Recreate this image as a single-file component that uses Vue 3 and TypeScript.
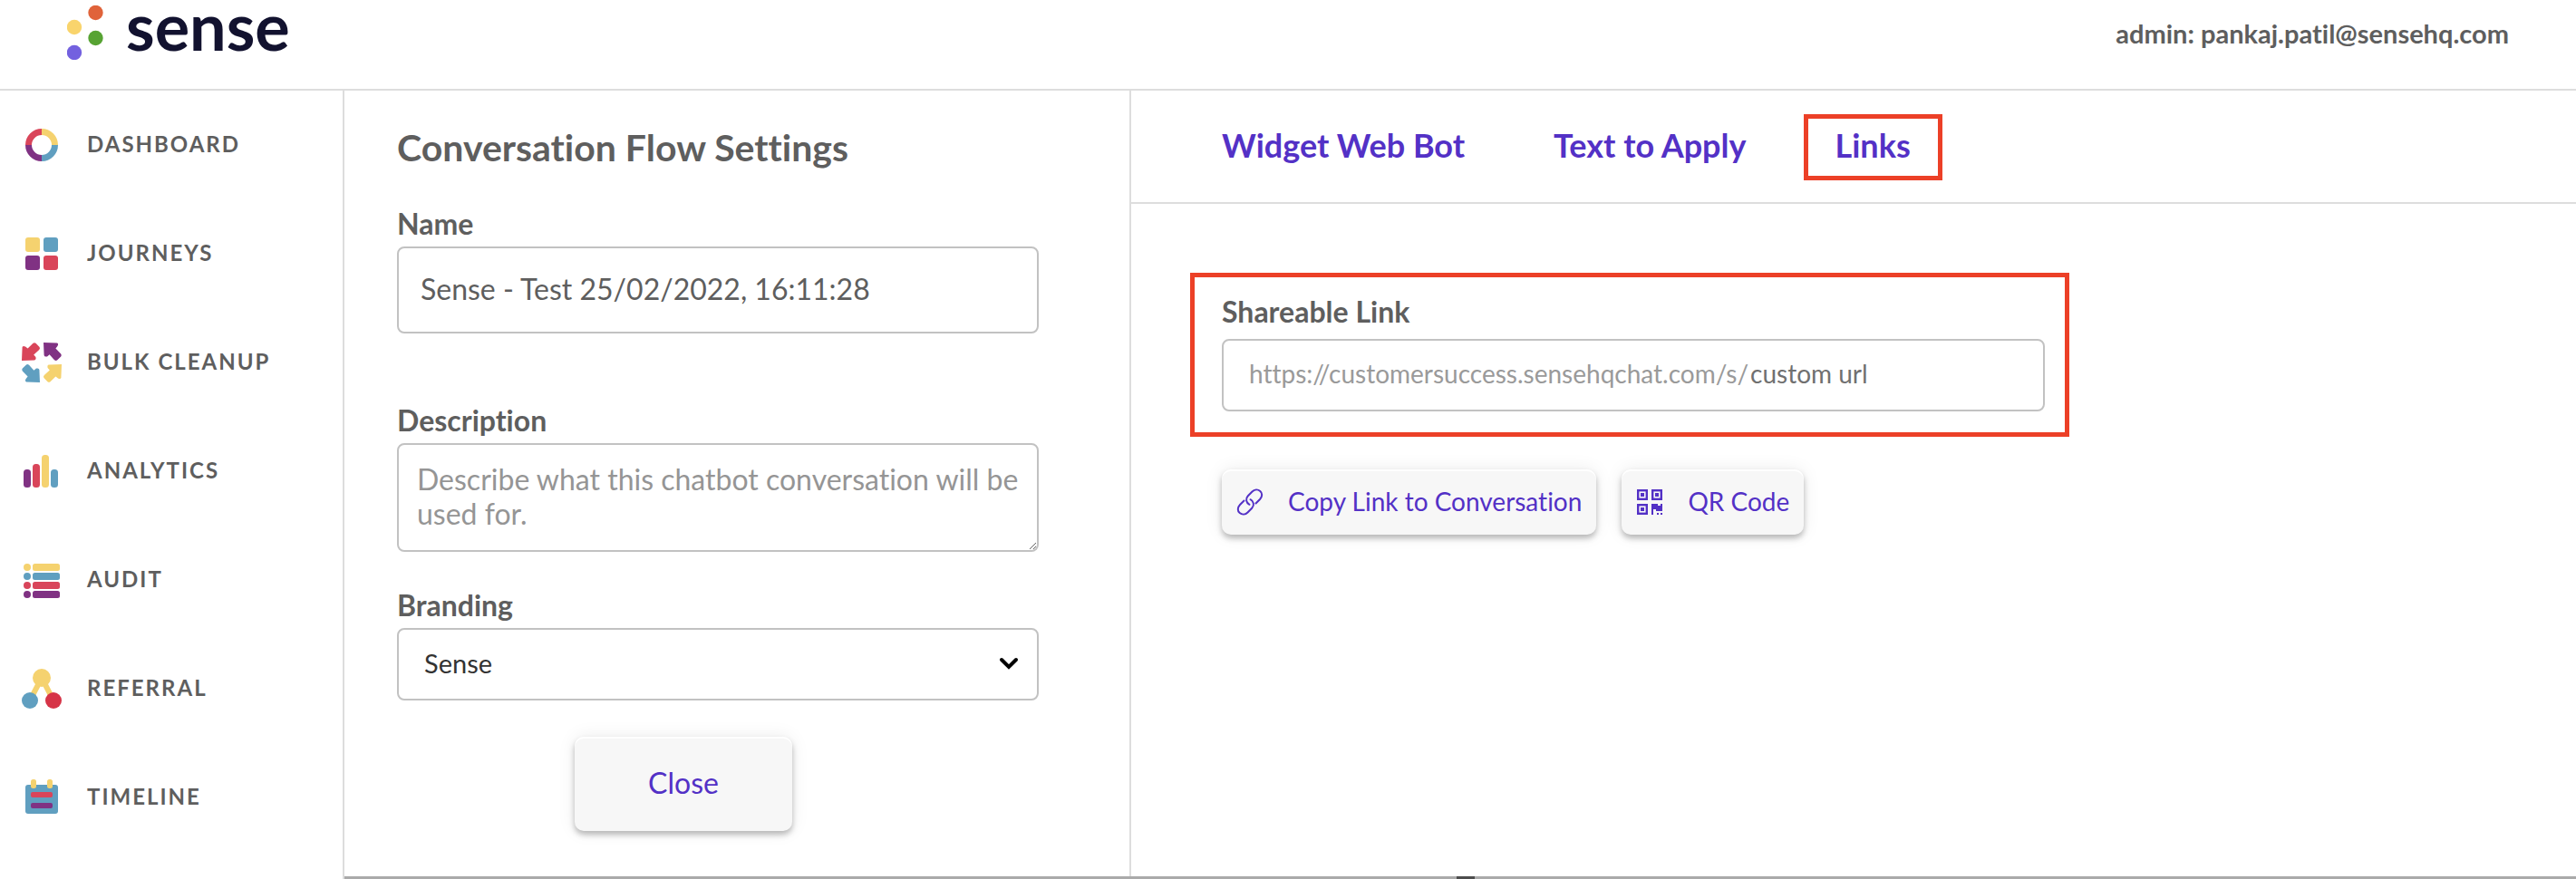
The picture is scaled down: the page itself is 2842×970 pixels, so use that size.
<script setup lang="ts">
import { ref } from 'vue'

type IconName = 'dashboard' | 'journeys' | 'cleanup' | 'analytics' | 'audit' | 'referral' | 'timeline'

const navItems: { label: string; icon: IconName }[] = [
  { label: 'DASHBOARD', icon: 'dashboard' },
  { label: 'JOURNEYS', icon: 'journeys' },
  { label: 'BULK CLEANUP', icon: 'cleanup' },
  { label: 'ANALYTICS', icon: 'analytics' },
  { label: 'AUDIT', icon: 'audit' },
  { label: 'REFERRAL', icon: 'referral' },
  { label: 'TIMELINE', icon: 'timeline' },
]

const tabs = ['Widget Web Bot', 'Text to Apply', 'Links']
const activeTab = ref('Links')

const name = ref('Sense - Test 25/02/2022, 16:11:28')
const description = ref('')
const branding = ref('Sense')
const customUrl = ref('')
const linkPrefix = 'https://customersuccess.sensehqchat.com/s/'

const arrow = 'M0 20L.6 5Q1.5 3 4 4.6L6.6 6.6L12.5 .8Q14 -.4 15.5 .8L19.6 5Q20.6 6.5 19.2 8L13.2 13.4L15.4 16Q16.2 19 14 19.4Z'
const chain = 'M21.5 16.5L26 12C29 8.8 28.8 5 26.3 2.9C23.6 .6 20 1 17.5 3.5L12.8 8.3C9.8 11.5 10.8 15.8 14.5 17.8'
</script>

<template>
  <div class="app">
    <header class="header">
      <a class="brand" href="#" aria-label="sense">
        <svg class="brand-mark" viewBox="0 0 40 60" aria-hidden="true">
          <circle cx="31.5" cy="8" r="8.2" fill="#e0633a" />
          <circle cx="8" cy="24" r="8.2" fill="#f9d46c" />
          <circle cx="31.5" cy="36" r="8.2" fill="#57a333" />
          <circle cx="8" cy="52" r="8.2" fill="#7361df" />
        </svg>
        <span class="brand-word">sense</span>
      </a>
      <div class="user">admin: pankaj.patil@sensehq.com</div>
    </header>

    <nav class="sidebar">
      <a v-for="item in navItems" :key="item.label" class="nav-item" href="#">
        <svg class="nav-icon" viewBox="0 0 48 48" aria-hidden="true">
          <g v-if="item.icon === 'dashboard'" fill="none" stroke-width="7">
            <path d="M24 9.5A14.5 14.5 0 0 1 38.5 24" stroke="#f5d26f" />
            <path d="M38.5 24A14.5 14.5 0 0 1 24 38.5" stroke="#609fc0" />
            <path d="M24 38.5A14.5 14.5 0 0 1 9.5 24" stroke="#803283" />
            <path d="M9.5 24A14.5 14.5 0 0 1 24 9.5" stroke="#d9455a" />
          </g>
          <g v-else-if="item.icon === 'journeys'">
            <rect x="6" y="6" width="16" height="16" rx="3" fill="#f5d26f" />
            <rect x="26" y="6" width="16" height="16" rx="3" fill="#609fc0" />
            <rect x="6" y="26" width="16" height="16" rx="3" fill="#803283" />
            <rect x="26" y="26" width="16" height="16" rx="3" fill="#d9455a" />
          </g>
          <g v-else-if="item.icon === 'cleanup'">
            <path :d="arrow" transform="translate(2 2)" fill="#d9455a" />
            <path :d="arrow" transform="translate(26 2) rotate(90 10 10)" fill="#803283" />
            <path :d="arrow" transform="translate(26 26) rotate(180 10 10)" fill="#f5d26f" />
            <path :d="arrow" transform="translate(2 26) rotate(270 10 10)" fill="#609fc0" />
          </g>
          <g v-else-if="item.icon === 'analytics'">
            <rect x="4" y="22" width="8" height="20" rx="3.5" fill="#803283" />
            <rect x="14" y="16" width="8" height="26" rx="3.5" fill="#d9455a" />
            <rect x="24" y="6" width="8" height="36" rx="3.5" fill="#f5d26f" />
            <rect x="34" y="22" width="8" height="20" rx="3.5" fill="#609fc0" />
          </g>
          <g v-else-if="item.icon === 'audit'">
            <g v-for="(color, i) in ['#f5d26f', '#609fc0', '#d9455a', '#803283']" :key="color" :fill="color">
              <circle cx="8" :cy="10 + i * 10" r="4" />
              <rect x="14" :y="6 + i * 10" width="30" height="8" rx="2.5" />
            </g>
          </g>
          <g v-else-if="item.icon === 'referral'">
            <path d="M12 35L24 12L36 35" fill="none" stroke="#f5d26f" stroke-width="6" />
            <circle cx="24" cy="12" r="10" fill="#f5d26f" />
            <circle cx="11" cy="37" r="9" fill="#609fc0" />
            <circle cx="37" cy="37" r="9" fill="#d63447" />
          </g>
          <g v-else>
            <rect x="6" y="10" width="36" height="32" rx="3" fill="#609fc0" />
            <rect x="12" y="4" width="6" height="10" rx="2.5" fill="#f5d26f" />
            <rect x="30" y="4" width="6" height="10" rx="2.5" fill="#f5d26f" />
            <rect x="12" y="18" width="24" height="6" rx="2" fill="#d9455a" />
            <rect x="12" y="30" width="24" height="6" rx="2" fill="#803283" />
          </g>
        </svg>
        <span class="nav-label">{{ item.label }}</span>
      </a>
    </nav>

    <main class="workspace">
      <form class="settings" @submit.prevent>
        <h1 class="title">Conversation Flow Settings</h1>

        <div class="field field-name">
          <label class="label" for="flow-name">Name</label>
          <input id="flow-name" v-model="name" class="control name-input" type="text" />
        </div>

        <div class="field">
          <label class="label" for="flow-description">Description</label>
          <textarea
            id="flow-description"
            v-model="description"
            class="control description-input"
            placeholder="Describe what this chatbot conversation will be used for."
          ></textarea>
        </div>

        <div class="field">
          <label class="label" for="flow-branding">Branding</label>
          <div class="select-wrap">
            <select id="flow-branding" v-model="branding" class="control branding-select">
              <option>Sense</option>
            </select>
            <svg class="chevron" viewBox="0 0 22 14" aria-hidden="true">
              <path d="M3 3L11 11L19 3" fill="none" stroke="#000" stroke-width="4" stroke-linecap="round" />
            </svg>
          </div>
        </div>

        <button class="button close-button" type="button"><span class="button-text">Close</span></button>
      </form>

      <section class="share">
        <div class="tabs" role="tablist">
          <button
            v-for="tab in tabs"
            :key="tab"
            class="tab"
            :class="{ active: tab === activeTab }"
            type="button"
            role="tab"
            :aria-selected="tab === activeTab"
            @click="activeTab = tab"
          >
            {{ tab }}
          </button>
        </div>

        <div class="share-body">
          <div class="link-box">
            <label class="label" for="custom-url">Shareable Link</label>
            <div class="control url-control">
              <span class="url-prefix">{{ linkPrefix }}</span>
              <input id="custom-url" v-model="customUrl" class="url-input" type="text" placeholder="custom url" />
            </div>
          </div>

          <div class="actions">
            <button class="button action-button" type="button">
              <svg class="action-icon" viewBox="0 0 30 30" aria-hidden="true">
                <g fill="none" stroke="#5331c6" stroke-width="2" stroke-linecap="round">
                  <path :d="chain" />
                  <path :d="chain" transform="rotate(180 15 15)" />
                </g>
              </svg>
              <span class="button-text">Copy Link to Conversation</span>
            </button>
            <button class="button action-button" type="button">
              <svg class="action-icon" viewBox="-1 -1 30 30" aria-hidden="true">
                <g fill="none" stroke="#5331c6" stroke-width="2.4">
                  <rect x="1.2" y="1.2" width="9.6" height="9.6" />
                  <rect x="17.2" y="1.2" width="9.6" height="9.6" />
                  <rect x="1.2" y="17.2" width="9.6" height="9.6" />
                </g>
                <g fill="#5331c6">
                  <rect x="4" y="4" width="4" height="4" />
                  <rect x="20" y="4" width="4" height="4" />
                  <rect x="4" y="20" width="4" height="4" />
                  <path d="M16 16h7v2h3v-2h2v8h-7v-2h-3v6h-2z" />
                  <rect x="22" y="26" width="2" height="2" />
                  <rect x="26" y="26" width="2" height="2" />
                </g>
              </svg>
              <span class="button-text">QR Code</span>
            </button>
          </div>
        </div>
      </section>

      <div class="splitter"><span class="splitter-grip"></span></div>
    </main>
  </div>
</template>

<style>
body {
  margin: 0;
  background: #fff;
}
</style>

<style scoped>
.app,
.app * {
  box-sizing: border-box;
}

.app {
  display: grid;
  grid-template-columns: 380px minmax(0, 1fr);
  grid-template-rows: auto 1fr;
  min-height: 100vh;
  color: #5e5e5e;
  font-family: Lato, 'Open Sans', sans-serif;
  font-variant-ligatures: none;
}

button,
input,
select,
textarea {
  font-family: inherit;
  font-variant-ligatures: inherit;
}

.header {
  grid-column: 1 / -1;
  display: flex;
  justify-content: space-between;
  align-items: flex-start;
  padding: 6px 74px 30px;
  border-bottom: 2px solid #ddd;
}

.brand {
  display: flex;
  align-items: flex-start;
  gap: 25px;
  color: #12122f;
  text-decoration: none;
}

.brand-mark {
  width: 40px;
  height: 60px;
}

.brand-word {
  font-size: 72px;
  font-weight: 700;
  line-height: 44px;
}

.user {
  font-size: 29px;
  font-weight: 700;
  line-height: 62px;
}

.sidebar {
  display: flex;
  flex-direction: column;
  border-right: 2px solid #ddd;
}

.nav-item {
  display: flex;
  align-items: center;
  gap: 26px;
  height: 120px;
  padding-left: 22px;
  color: inherit;
  text-decoration: none;
}

.nav-icon {
  flex: none;
  width: 48px;
  height: 48px;
}

.nav-label {
  padding-bottom: 4px;
  font-size: 24px;
  font-weight: 700;
  letter-spacing: 2px;
}

.workspace {
  display: grid;
  grid-template-columns: minmax(0, 868fr) minmax(0, 1594fr);
  grid-template-rows: 1fr auto;
}

.settings {
  padding: 38px 100px 40px 58px;
  border-right: 2px solid #ddd;
}

.title {
  margin: 0 0 40px;
  font-size: 41px;
  font-weight: 700;
  line-height: 50px;
}

.field {
  margin-bottom: 40px;
}

.field-name {
  margin-bottom: 77px;
}

.label {
  display: block;
  margin-bottom: 6px;
  font-size: 32px;
  font-weight: 700;
  line-height: 38px;
}

.control {
  display: block;
  width: 100%;
  border: 2px solid #c2c2c2;
  border-radius: 8px;
  background: #fff;
  color: #5e5e5e;
}

.name-input {
  height: 96px;
  padding: 0 24px 4px;
  font-size: 32px;
}

.description-input {
  height: 120px;
  padding: 19px 8px 8px 20px;
  font-size: 32px;
  line-height: 38px;
}

.description-input::placeholder {
  color: #959595;
}

.select-wrap {
  position: relative;
}

.branding-select {
  height: 80px;
  padding: 0 60px 4px 28px;
  appearance: none;
  color: #333;
  font-size: 29px;
}

.chevron {
  position: absolute;
  top: 32px;
  right: 22px;
  width: 22px;
  height: 14px;
  pointer-events: none;
}

.button {
  border: 0;
  border-radius: 10px;
  background: #f7f7f7;
  box-shadow: inset 0 2px #fff, 0 4px 6px rgba(0, 0, 0, 0.26), 0 0 20px rgba(0, 0, 0, 0.08);
  color: #5331c6;
  cursor: pointer;
}

.button-text {
  padding-bottom: 3px;
}

.close-button {
  display: flex;
  align-items: center;
  justify-content: center;
  width: 240px;
  height: 104px;
  margin-left: 196px;
  font-size: 32px;
}

.tabs {
  display: flex;
  gap: 28px;
  padding: 26px 65px 24px;
  border-bottom: 2px solid #ddd;
}

.tab {
  padding: 0 30px 5px;
  border: 5px solid transparent;
  background: none;
  color: #5331c6;
  font-size: 36px;
  font-weight: 700;
  line-height: 58px;
  cursor: pointer;
}

.tab.active {
  border-color: #ec4027;
}

.share-body {
  padding: 76px 65px;
}

.link-box {
  max-width: 970px;
  padding: 19px 22px 23px 30px;
  border: 5px solid #ec4027;
}

.link-box .label {
  margin-bottom: 11px;
}

.url-control {
  display: flex;
  align-items: center;
  gap: 2px;
  height: 80px;
  padding: 0 28px 4px;
  font-size: 28px;
}

.url-prefix {
  color: #9a9a9a;
}

.url-input {
  flex: 1;
  min-width: 0;
  padding: 0;
  border: 0;
  outline: 0;
  background: none;
  color: #5e5e5e;
  font-size: 28px;
}

.url-input::placeholder {
  color: #707070;
}

.actions {
  display: flex;
  gap: 28px;
  margin: 36px 35px 0;
}

.action-button {
  display: flex;
  align-items: center;
  gap: 27px;
  height: 72px;
  padding: 0 16px;
  font-size: 28px;
}

.action-icon {
  width: 30px;
  height: 30px;
}

.splitter {
  grid-column: 1 / -1;
  display: flex;
  justify-content: center;
  height: 3px;
  padding-left: 12px;
  background: #aaa;
}

.splitter-grip {
  width: 20px;
  background: #4d4d4d;
}
</style>
